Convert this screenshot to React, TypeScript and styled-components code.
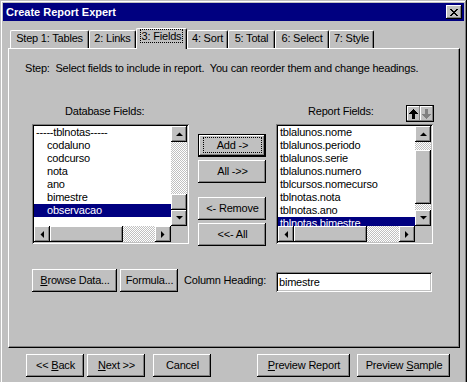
import React from 'react'
import styled, { createGlobalStyle, css } from 'styled-components'

const GlobalStyle = createGlobalStyle`
  html, body {
    margin: 0;
    padding: 0;
    overflow: hidden;
    background: #c0c0c0;
  }
  body {
    font-family: 'Liberation Sans', Arial, sans-serif;
    font-size: 11px;
    letter-spacing: -0.2px;
    color: #000;
  }
  * {
    box-sizing: border-box;
  }
`

const raised = css`
  background: #c0c0c0;
  box-shadow: inset -1px -1px #000, inset 1px 1px #fff, inset -2px -2px #808080;
`

const sunken = css`
  box-shadow: inset 1px 1px #808080, inset -1px -1px #fff, inset 2px 2px #000, inset -2px -2px #c0c0c0;
`

const checker = css`
  background: repeating-conic-gradient(#c0c0c0 0% 25%, #fff 0% 50%) 0 0 / 2px 2px;
`

const Window = styled.div`
  width: 467px;
  height: 392px;
  padding: 3px;
  background: #c0c0c0;
  box-shadow: inset -1px -1px #000, inset 1px 1px #c0c0c0, inset -2px -2px #808080, inset 2px 2px #fff;
`

const TitleBar = styled.div`
  height: 18px;
  display: flex;
  align-items: center;
  padding: 0 2px 0 3px;
  background: #000080;
  color: #fff;
  font-weight: bold;
  letter-spacing: 0;
`

const CloseButton = styled.button`
  ${raised};
  margin-left: auto;
  width: 16px;
  height: 14px;
  border: none;
  padding: 0;
  display: flex;
  align-items: center;
  justify-content: center;
`

const Body = styled.div`
  padding: 7px 4px 0 5px;
`

const TabRow = styled.div`
  display: flex;
  align-items: flex-end;
  height: 20px;
  padding-left: 2px;
`

const Tab = styled.div<{ $w: number; $active?: boolean }>`
  position: relative;
  z-index: ${(p) => (p.$active ? 1 : 0)};
  width: ${(p) => p.$w}px;
  height: ${(p) => (p.$active ? 21 : 18)}px;
  margin-bottom: ${(p) => (p.$active ? -1 : 0)}px;
  padding-top: 1px;
  background: #c0c0c0;
  border-top: 1px solid #fff;
  border-left: 1px solid #fff;
  border-right: 1px solid #000;
  border-radius: 2px 2px 0 0;
  box-shadow: inset -1px 0 #808080;
  text-align: center;
  line-height: 13px;
  white-space: nowrap;
`

const FocusText = styled.span`
  border: 1px dotted #000;
  padding: 0 1px;
`

const Panel = styled.div`
  width: 452px;
  height: 300px;
  border-top: 1px solid #fff;
  border-left: 1px solid #fff;
  border-right: 1px solid #000;
  border-bottom: 1px solid #000;
  box-shadow: inset -1px -1px #808080;
  padding-top: 13px;
`

const Instruction = styled.p`
  margin: 0;
  padding-left: 16px;
  line-height: 13px;
  white-space: pre;
`

const FieldsRow = styled.div`
  display: flex;
  align-items: flex-start;
  margin: 30px 0 0 23px;
`

const Column = styled.div`
  display: flex;
  flex-direction: column;
  width: 157px;
`

const ColumnHeader = styled.div`
  display: flex;
  align-items: flex-start;
  height: 19px;
`

const FieldLabel = styled.span<{ $indent: number }>`
  padding-left: ${(p) => p.$indent}px;
  line-height: 13px;
`

const MoveButtons = styled.div`
  display: flex;
  margin-left: auto;
  margin-right: -1px;
  border: 1px solid #000;
`

const MoveButton = styled.button`
  width: 13px;
  height: 15px;
  padding: 0;
  border: none;
  background: #c0c0c0;
  box-shadow: inset -1px -1px #808080, inset 1px 1px #fff;
  display: flex;
  align-items: center;
  justify-content: center;
`

const ButtonStack = styled.div`
  display: flex;
  flex-direction: column;
  gap: 14px;
  margin: 0 10px 0 9px;
  padding-top: 29px;
`

const ButtonPair = styled.div`
  display: flex;
  flex-direction: column;
  gap: 3px;
`

const Button = styled.button<{ $w: number; $ml?: number; $default?: boolean }>`
  ${raised};
  width: ${(p) => p.$w}px;
  height: 23px;
  margin-left: ${(p) => p.$ml ?? 0}px;
  flex: none;
  border: none;
  padding: 3px 4px 4px 5px;
  font: inherit;
  letter-spacing: inherit;
  color: #000;
  line-height: 13px;
  display: flex;
  align-items: center;
  justify-content: center;
  white-space: pre;
  ${(p) =>
    p.$default &&
    css`
      box-shadow: inset 0 0 0 1px #000, inset -2px -2px #000, inset 2px 2px #fff, inset -3px -3px #808080;
    `}
`

const ButtonFocus = styled.span`
  flex: 1;
  align-self: stretch;
  display: flex;
  align-items: center;
  justify-content: center;
  border: 1px dotted #000;
`

const ListFrame = styled.div`
  ${sunken};
  width: 157px;
  height: 120px;
  padding: 2px;
  background: #fff;
  display: grid;
  grid-template-columns: 1fr 16px;
  grid-template-rows: 1fr 16px;
`

const ListItems = styled.div`
  overflow: hidden;
`

const ListItem = styled.div<{ $indent: number; $selected?: boolean }>`
  height: 13px;
  line-height: 13px;
  padding-left: ${(p) => p.$indent}px;
  white-space: nowrap;
  background: ${(p) => (p.$selected ? '#000080' : 'transparent')};
  color: ${(p) => (p.$selected ? '#fff' : '#000')};
`

const VScroll = styled.div`
  display: flex;
  flex-direction: column;
`

const HScroll = styled.div`
  display: flex;
`

const Track = styled.div<{ $vertical?: boolean }>`
  ${checker};
  flex: 1;
  display: flex;
  flex-direction: ${(p) => (p.$vertical ? 'column' : 'row')};
`

const Thumb = styled.div`
  ${raised};
  flex: none;
`

const ScrollArrow = styled.div`
  ${raised};
  width: 16px;
  height: 16px;
  flex: none;
  display: flex;
  align-items: center;
  justify-content: center;
`

const Corner = styled.div`
  background: #c0c0c0;
`

const BottomRow = styled.div`
  display: flex;
  align-items: flex-start;
  width: 401px;
  margin: 23px 0 0 23px;
`

const InlineLabel = styled.span`
  margin-left: 6px;
  line-height: 23px;
`

const HeadingInput = styled.input`
  ${sunken};
  width: 156px;
  height: 20px;
  margin: 3px 1px 0 auto;
  padding: 0 3px;
  border: none;
  outline: none;
  background: #fff;
  font: inherit;
  letter-spacing: inherit;
  color: #000;
`

const Footer = styled.div`
  display: flex;
  margin-top: 6px;
  padding-left: 18px;
`

const Arrow = ({ dir }: { dir: 'up' | 'down' | 'left' | 'right' }) => {
  const pts = {
    up: '0,4 7,4 3.5,0.5',
    down: '0,0 7,0 3.5,3.5',
    left: '4,0 4,7 0.5,3.5',
    right: '0,0 0,7 3.5,3.5',
  }[dir]
  const vertical = dir === 'up' || dir === 'down'
  return (
    <svg width={vertical ? 7 : 4} height={vertical ? 4 : 7} viewBox={vertical ? '0 0 7 4' : '0 0 4 7'}>
      <polygon points={pts} fill="#000" />
    </svg>
  )
}

const CloseGlyph = () => (
  <svg width="8" height="7" viewBox="0 0 8 7" shapeRendering="crispEdges">
    <path
      d="M0 0h2v1H0zM6 0h2v1H6zM1 1h2v1H1zM5 1h2v1H5zM2 2h4v1H2zM3 3h2v1H3zM2 4h4v1H2zM1 5h2v1H1zM5 5h2v1H5zM0 6h2v1H0zM6 6h2v1H6z"
      fill="#000"
    />
  </svg>
)

const MoveArrow = ({ up, color }: { up?: boolean; color: string }) => (
  <svg width="9" height="10" viewBox="0 0 9 10" shapeRendering="crispEdges">
    <polygon
      points={up ? '4.5,0 9,5 6,5 6,10 3,10 3,5 0,5' : '3,0 6,0 6,5 9,5 4.5,10 0,5 3,5'}
      fill={color}
    />
  </svg>
)

type Item = { text: string; indent?: boolean; selected?: boolean }

type ListProps = {
  items: Item[]
  vThumb: number
  vPos: number
  hThumb: number
}

const TRACK_V = 68
const TRACK_H = 105

const FieldList = ({ items, vThumb, vPos, hThumb }: ListProps) => (
  <ListFrame>
    <ListItems>
      {items.map((it) => (
        <ListItem key={it.text} $indent={it.indent ? 13 : 2} $selected={it.selected}>
          {it.text}
        </ListItem>
      ))}
    </ListItems>
    <VScroll>
      <ScrollArrow>
        <Arrow dir="up" />
      </ScrollArrow>
      <Track $vertical>
        <Thumb style={{ height: vThumb, marginTop: Math.round((TRACK_V - vThumb) * vPos) }} />
      </Track>
      <ScrollArrow>
        <Arrow dir="down" />
      </ScrollArrow>
    </VScroll>
    <HScroll>
      <ScrollArrow>
        <Arrow dir="left" />
      </ScrollArrow>
      <Track>
        <Thumb style={{ width: Math.min(hThumb, TRACK_H) }} />
      </Track>
      <ScrollArrow>
        <Arrow dir="right" />
      </ScrollArrow>
    </HScroll>
    <Corner />
  </ListFrame>
)

const databaseFields: Item[] = [
  { text: '-----tblnotas-----' },
  { text: 'codaluno', indent: true },
  { text: 'codcurso', indent: true },
  { text: 'nota', indent: true },
  { text: 'ano', indent: true },
  { text: 'bimestre', indent: true },
  { text: 'observacao', indent: true, selected: true },
]

const reportFields: Item[] = [
  { text: 'tblalunos.nome' },
  { text: 'tblalunos.periodo' },
  { text: 'tblalunos.serie' },
  { text: 'tblalunos.numero' },
  { text: 'tblcursos.nomecurso' },
  { text: 'tblnotas.nota' },
  { text: 'tblnotas.ano' },
  { text: 'tblnotas.bimestre', selected: true },
]

const tabs = [
  { label: 'Step 1: Tables', w: 79 },
  { label: '2: Links', w: 47 },
  { label: '3: Fields', w: 51, active: true },
  { label: '4: Sort', w: 41 },
  { label: '5: Total', w: 47 },
  { label: '6: Select', w: 54 },
  { label: '7: Style', w: 45 },
]

export default function App() {
  return (
    <>
      <GlobalStyle />
      <Window>
        <TitleBar>
          Create Report Expert
          <CloseButton type="button" aria-label="Close">
            <CloseGlyph />
          </CloseButton>
        </TitleBar>
        <Body>
          <TabRow>
            {tabs.map((t) => (
              <Tab key={t.label} $w={t.w} $active={t.active}>
                {t.active ? <FocusText>{t.label}</FocusText> : t.label}
              </Tab>
            ))}
          </TabRow>
          <Panel>
            <Instruction>
              Step:  Select fields to include in report.  You can reorder them and change headings.
            </Instruction>
            <FieldsRow>
              <Column>
                <ColumnHeader>
                  <FieldLabel $indent={33}>Database Fields:</FieldLabel>
                </ColumnHeader>
                <FieldList items={databaseFields} vThumb={16} vPos={1} hThumb={73} />
              </Column>
              <ButtonStack>
                <ButtonPair>
                  <Button type="button" $w={68} $default>
                    <ButtonFocus>Add -&gt;</ButtonFocus>
                  </Button>
                  <Button type="button" $w={68}>
                    <span>All -&gt;&gt;</span>
                  </Button>
                </ButtonPair>
                <ButtonPair>
                  <Button type="button" $w={68}>
                    <span>&lt;- Remove</span>
                  </Button>
                  <Button type="button" $w={68}>
                    <span>&lt;&lt;- All</span>
                  </Button>
                </ButtonPair>
              </ButtonStack>
              <Column>
                <ColumnHeader>
                  <FieldLabel $indent={32}>Report Fields:</FieldLabel>
                  <MoveButtons>
                    <MoveButton type="button">
                      <MoveArrow up color="#000" />
                    </MoveButton>
                    <MoveButton type="button">
                      <MoveArrow color="#808080" />
                    </MoveButton>
                  </MoveButtons>
                </ColumnHeader>
                <FieldList items={reportFields} vThumb={54} vPos={8 / 14} hThumb={73} />
              </Column>
            </FieldsRow>
            <BottomRow>
              <Button type="button" $w={85}>
                <span>
                  <u>B</u>rowse Data...
                </span>
              </Button>
              <Button type="button" $w={58} $ml={3}>
                <span>Formula...</span>
              </Button>
              <InlineLabel>Column Heading:</InlineLabel>
              <HeadingInput defaultValue="bimestre" />
            </BottomRow>
          </Panel>
          <Footer>
            <Button type="button" $w={58}>
              <span>
                &lt;&lt; <u>B</u>ack
              </span>
            </Button>
            <Button type="button" $w={58} $ml={3}>
              <span>
                <u>N</u>ext &gt;&gt;
              </span>
            </Button>
            <Button type="button" $w={58} $ml={8}>
              <span>Cancel</span>
            </Button>
            <Button type="button" $w={93} $ml={46}>
              <span>
                <u>P</u>review Report
              </span>
            </Button>
            <Button type="button" $w={93} $ml={7}>
              <span>
                Preview <u>S</u>ample
              </span>
            </Button>
          </Footer>
        </Body>
      </Window>
    </>
  )
}
